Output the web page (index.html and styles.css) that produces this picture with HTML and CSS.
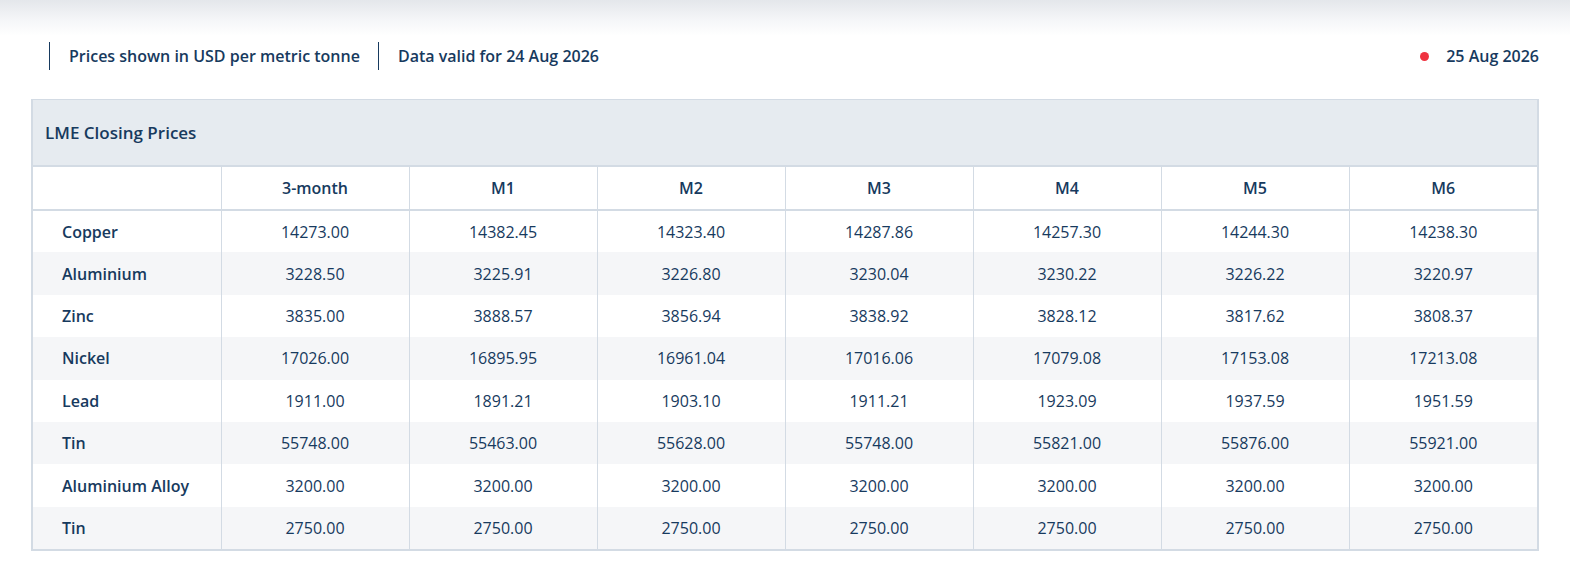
FILE: index.html
```html
<!DOCTYPE html>
<html lang="en">
<head>
<meta charset="utf-8">
<title>LME Closing Prices</title>
<link rel="stylesheet" href="styles.css">
</head>
<body>
<div class="topfade"></div>
<div class="infobar">
  <div class="info-item">Prices shown in USD per metric tonne</div>
  <div class="info-item">Data valid for 24 Aug 2026</div>
  <div class="live"><span class="dot"></span><span>25 Aug 2026</span></div>
</div>
<div class="panel">
  <div class="panel-title">LME Closing Prices</div>
  <table class="prices">
    <thead>
      <tr><th></th><th>3-month</th><th>M1</th><th>M2</th><th>M3</th><th>M4</th><th>M5</th><th>M6</th></tr>
    </thead>
    <tbody>
      <tr><td class="metal">Copper</td><td>14273.00</td><td>14382.45</td><td>14323.40</td><td>14287.86</td><td>14257.30</td><td>14244.30</td><td>14238.30</td></tr>
      <tr><td class="metal">Aluminium</td><td>3228.50</td><td>3225.91</td><td>3226.80</td><td>3230.04</td><td>3230.22</td><td>3226.22</td><td>3220.97</td></tr>
      <tr><td class="metal">Zinc</td><td>3835.00</td><td>3888.57</td><td>3856.94</td><td>3838.92</td><td>3828.12</td><td>3817.62</td><td>3808.37</td></tr>
      <tr><td class="metal">Nickel</td><td>17026.00</td><td>16895.95</td><td>16961.04</td><td>17016.06</td><td>17079.08</td><td>17153.08</td><td>17213.08</td></tr>
      <tr><td class="metal">Lead</td><td>1911.00</td><td>1891.21</td><td>1903.10</td><td>1911.21</td><td>1923.09</td><td>1937.59</td><td>1951.59</td></tr>
      <tr><td class="metal">Tin</td><td>55748.00</td><td>55463.00</td><td>55628.00</td><td>55748.00</td><td>55821.00</td><td>55876.00</td><td>55921.00</td></tr>
      <tr><td class="metal">Aluminium Alloy</td><td>3200.00</td><td>3200.00</td><td>3200.00</td><td>3200.00</td><td>3200.00</td><td>3200.00</td><td>3200.00</td></tr>
      <tr><td class="metal">Tin</td><td>2750.00</td><td>2750.00</td><td>2750.00</td><td>2750.00</td><td>2750.00</td><td>2750.00</td><td>2750.00</td></tr>
    </tbody>
  </table>
</div>
</body>
</html>
```
FILE: styles.css
```css
* { box-sizing: border-box; }
html, body { margin: 0; padding: 0; background: #fff; }
body {
  font-family: "Open Sans", "Noto Sans", "Lato", sans-serif;
  color: #173a5e;
  font-size: 16px;
}
.topfade {
  height: 36px;
  background: linear-gradient(to bottom, #e4e7eb 0%, #f6f7f9 60%, #ffffff 100%);
}
.infobar {
  display: flex;
  align-items: center;
  margin-top: 6px;
  padding: 0 31px 0 49px;
  height: 28px;
  font-weight: 600;
}
.info-item {
  border-left: 1px solid #173a5e;
  padding: 0 18px 0 19px;
  line-height: 28px;
  height: 28px;
}
.live {
  margin-left: auto;
  display: flex;
  align-items: center;
  gap: 17px;
}
.dot {
  width: 9px;
  height: 9px;
  border-radius: 50%;
  background: #ef3340;
}
.panel {
  margin: 29px 31px 0 31px;
  border: 2px solid #d3dbe4;
  border-top-width: 1px;
}
.panel-title {
  background: #e6ebf0;
  height: 67px;
  display: flex;
  align-items: center;
  padding-left: 12px;
  font-weight: 600;
  font-size: 17px;
  border-bottom: 2px solid #d3dbe4;
}
.prices {
  width: 100%;
  border-collapse: collapse;
  table-layout: fixed;
}
.prices th, .prices td {
  text-align: center;
  border-left: 1px solid #d3dbe4;
  padding: 0;
}
.prices th:first-child, .prices td:first-child { border-left: none; }
.prices th {
  height: 43px;
  font-weight: 600;
  border-bottom: 2px solid #d3dbe4;
}
.prices td {
  height: 42.4px;
  font-weight: 400;
}
.prices td.metal {
  text-align: left;
  padding-left: 29px;
  font-weight: 600;
}
.prices tbody tr:nth-child(even) { background: #f5f6f8; }
```
